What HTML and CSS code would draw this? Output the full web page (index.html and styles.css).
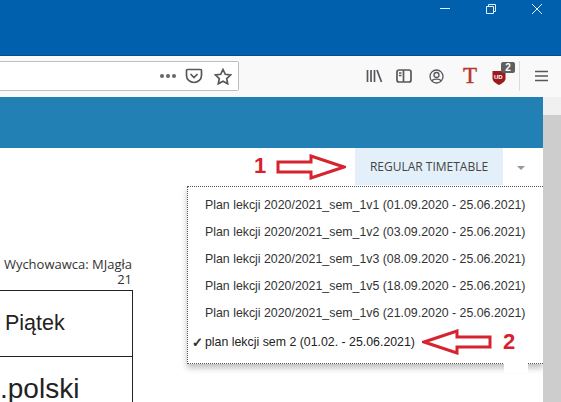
FILE: index.html
```html
<!DOCTYPE html>
<html lang="pl">
<head>
  <meta charset="UTF-8">
  <meta name="viewport" content="width=device-width, initial-scale=1.0">
  <title>Plan lekcji</title>
  <link rel="stylesheet" href="styles.css">
</head>
<body>
  <div class="titlebar">
    <svg class="win-icon" width="12" height="12" viewBox="0 0 12 12"><path d="M1 5.500h10" /></svg>
    <svg class="win-icon" width="12" height="12" viewBox="0 0 12 12"><path d="M1.500 3.500h7v7h-7zM3.500 3.500v-2h7v7h-2" /></svg>
    <svg class="win-icon" width="12" height="12" viewBox="0 0 12 12"><path d="M1 1l10 10M11 1L1 11" /></svg>
  </div>

  <div class="toolbar">
    <div class="urlbar">
      <span class="dots"><i></i><i></i><i></i></span>
      <svg class="tool-icon" width="18" height="16" viewBox="0 0 18 16"><path d="M2.500 1.500h13a1 1 0 0 1 1 1v5a7.500 7 0 0 1-15 0v-5a1 1 0 0 1 1-1zM5.500 6l3.500 3.500 3.500-3.500" /></svg>
      <svg class="tool-icon" width="18" height="17" viewBox="0 0 18 17"><path d="M9 1.500l2.300 4.800 5.200.7-3.800 3.600 1 5.200L9 13.300l-4.700 2.500 1-5.200L1.500 7l5.200-.7z" /></svg>
    </div>
    <div class="tools">
      <svg class="tool-icon library" width="17" height="16" viewBox="0 0 17 16"><path d="M1.500 2v12M5 2v12M8.500 2v12M11 2l4.500 12" /></svg>
      <svg class="tool-icon sidebar" width="16" height="14" viewBox="0 0 16 14"><rect x="1" y="1" width="14" height="12" rx="2" /><path d="M7.500 1v12M3 4h2.500M3 6.500h2.500" /></svg>
      <svg class="tool-icon account" width="15" height="15" viewBox="0 0 15 15"><circle cx="7.500" cy="7.500" r="6.500" /><circle cx="7.500" cy="6" r="2.500" /><path d="M3 12c1-2.500 8-2.500 9 0" /></svg>
      <span class="t-ext">T</span>
      <span class="ublock">
        <svg width="14" height="15" viewBox="0 0 14 15"><path class="shield" d="M0.500 1h13v7.500c0 3-3.500 5-6.500 6.500-3-1.500-6.500-3.500-6.500-6.500z" /></svg>
        <span class="ublock-label">UD</span>
        <span class="ublock-badge">2</span>
      </span>
      <span class="tool-sep"></span>
      <svg class="tool-icon burger" width="13" height="12" viewBox="0 0 13 12"><path d="M0 1.500h13M0 6h13M0 10.500h13" /></svg>
    </div>
  </div>

  <div class="viewport">
    <div class="page">
      <div class="banner"></div>
      <div class="content">
        <div class="actions">
          <button class="timetable-btn">REGULAR TIMETABLE</button>
          <span class="caret"></span>
        </div>
        <div class="plan">
          <p class="teacher">Wychowawca: MJagła<br>21</p>
          <table class="grid">
            <tr><th>Piątek</th></tr>
            <tr><td>.polski</td></tr>
          </table>
        </div>

        <ul class="menu">
          <li>Plan lekcji 2020/2021_sem_1v1 (01.09.2020 - 25.06.2021)</li>
          <li>Plan lekcji 2020/2021_sem_1v2 (03.09.2020 - 25.06.2021)</li>
          <li>Plan lekcji 2020/2021_sem_1v3 (08.09.2020 - 25.06.2021)</li>
          <li>Plan lekcji 2020/2021_sem_1v5 (18.09.2020 - 25.06.2021)</li>
          <li>Plan lekcji 2020/2021_sem_1v6 (21.09.2020 - 25.06.2021)</li>
          <li class="checked">plan lekcji sem 2 (01.02. - 25.06.2021)</li>
        </ul>
        <span class="menu-notch"></span>

        <span class="mark mark-1">1</span>
        <svg class="arrow arrow-1" width="70" height="26" viewBox="0 0 70 26"><path d="M2 8h33V2l33 11-33 11v-6H2z" /></svg>
        <svg class="arrow arrow-2" width="70" height="26" viewBox="0 0 70 26"><path d="M68 8H35V2L2 13l33 11v-6h33z" /></svg>
        <span class="mark mark-2">2</span>
      </div>
    </div>
    <div class="scrollbar"></div>
  </div>
</body>
</html>
```

FILE: styles.css
```css
* {
  box-sizing: border-box;
}

html, body {
  margin: 0;
  height: 100%;
  overflow: hidden;
}

body {
  font-family: 'Liberation Sans', Arial, sans-serif;
  background-color: #fff;
  display: flex;
  flex-direction: column;
}

.titlebar {
  height: 56px;
  flex: none;
  background-color: #0060ae;
  border-bottom: 1px solid #00508f;
  display: flex;
  justify-content: flex-end;
  align-items: flex-start;
  gap: 34px;
  padding: 3px 18px 0 0;
}

.win-icon {
  fill: none;
  stroke: #e4f0fa;
  stroke-width: 1;
}

.toolbar {
  height: 41px;
  flex: none;
  background-color: #f9f9fa;
  display: flex;
  align-items: flex-start;
  padding-top: 5px;
}

.urlbar {
  width: 239px;
  height: 30px;
  background-color: #fff;
  border: 1px solid #bfbfc4;
  border-left: none;
  border-radius: 0 2px 2px 0;
  display: flex;
  justify-content: flex-end;
  align-items: center;
  gap: 11px;
  padding-right: 6px;
}

.dots {
  display: flex;
  gap: 2px;
  margin-right: -2px;
}

.dots i {
  width: 4px;
  height: 4px;
  border-radius: 50%;
  background-color: #666;
}

.tool-icon {
  fill: none;
  stroke: #58585c;
  stroke-width: 1.7;
  flex: none;
}

.tools {
  flex: 1;
  height: 30px;
  display: flex;
  align-items: center;
  padding-left: 127px;
}

.library {
  margin-right: 13px;
}

.sidebar {
  margin-right: 17px;
}

.account {
  stroke-width: 1.3;
  margin-right: 17px;
}

.t-ext {
  font-family: 'Liberation Serif', serif;
  font-weight: 400;
  font-size: 23px;
  color: #b5362a;
  width: 18px;
  text-align: center;
  margin-right: 13px;
  -webkit-text-stroke: 0.4px #b5362a;
}

.ublock {
  position: relative;
  width: 14px;
  height: 15px;
  margin-right: 13px;
  margin-top: 2px;
}

.ublock svg {
  display: block;
}

.shield {
  fill: #9c1a1e;
}

.ublock-label {
  position: absolute;
  left: 2px;
  top: 4px;
  font-size: 6px;
  font-weight: 700;
  color: #fff;
}

.ublock-badge {
  position: absolute;
  left: 9px;
  top: -8px;
  width: 14px;
  height: 11px;
  background-color: #5f5f5f;
  border-radius: 2px;
  color: #fff;
  font-size: 10px;
  font-weight: 700;
  line-height: 11px;
  text-align: center;
}

.tool-sep {
  width: 1px;
  height: 30px;
  background-color: #dcdcdf;
  margin-right: 15px;
}

.viewport {
  flex: 1;
  min-height: 0;
  display: flex;
}

.page {
  flex: 1;
  min-width: 0;
}

.banner {
  height: 51px;
  background-color: #2280b5;
}

.content {
  position: relative;
  height: 254px;
  overflow: hidden;
}

.actions {
  display: flex;
  justify-content: flex-end;
  align-items: center;
  height: 37px;
}

.timetable-btn {
  width: 148px;
  height: 37px;
  border: none;
  background-color: #e3f0fa;
  color: #444;
  font-family: 'Open Sans', sans-serif;
  font-size: 12px;
  padding: 0;
}

.caret {
  width: 0;
  height: 0;
  border: 4px solid transparent;
  border-top: 4px solid #999;
  border-bottom: none;
  margin: 2px 18px 0 14px;
}

.plan {
  width: 133px;
  margin-top: 72px;
}

.teacher {
  margin: 0;
  font-family: 'Open Sans', sans-serif;
  font-size: 13px;
  line-height: 15px;
  text-align: right;
  color: #333;
  padding-right: 1px;
}

.grid {
  width: 100%;
  border-collapse: collapse;
  margin-top: 3px;
}

.grid th,
.grid td {
  border: 1px solid #222;
  border-left: none;
  text-align: left;
  font-weight: 400;
  color: #222;
}

.grid th {
  height: 66px;
  font-size: 21.500px;
  padding-left: 5px;
}

.grid td {
  height: 60px;
  font-size: 28px;
  line-height: 32px;
  padding: 16px 0 0;
  vertical-align: top;
}

.menu {
  position: absolute;
  left: 187px;
  top: 38px;
  width: 356px;
  height: 178px;
  margin: 0;
  padding: 5px 0 0 17px;
  list-style: none;
  background-color: #fff;
  border-top: 1px dotted #555;
  border-left: 1px dotted #555;
  border-bottom: 1px dotted #555;
  box-shadow: 0 4px 6px rgba(0, 0, 0, 0.25);
  font-size: 12.350px;
  color: #333;
}

.menu li {
  height: 27px;
  line-height: 27px;
  white-space: nowrap;
}

.menu .checked {
  position: relative;
  margin-top: 2px;
  color: #222;
}

.menu .checked::before {
  content: "✓";
  position: absolute;
  left: -13px;
  font-family: 'DejaVu Sans', sans-serif;
  font-weight: 700;
  font-size: 13px;
  -webkit-text-stroke: 0.5px #222;
}

.menu-notch {
  position: absolute;
  left: 504px;
  top: 215px;
  width: 24px;
  height: 10px;
  background-color: #fff;
}

.mark {
  position: absolute;
  font-weight: 700;
  font-size: 22px;
  line-height: 20px;
  color: #d9202c;
}

.mark-1 {
  left: 254px;
  top: 8px;
}

.mark-2 {
  left: 503px;
  top: 184px;
}

.arrow {
  position: absolute;
  fill: #fff;
  stroke: #d5232f;
  stroke-width: 3;
}

.arrow-1 {
  left: 276px;
  top: 6px;
}

.arrow-2 {
  left: 422px;
  top: 181px;
}

.scrollbar {
  width: 18px;
  flex: none;
  background-color: #cdcdcd;
  background-image: linear-gradient(#f0f0f0, #f0f0f0);
  background-repeat: no-repeat;
  background-size: 100% 18px;
}
```
